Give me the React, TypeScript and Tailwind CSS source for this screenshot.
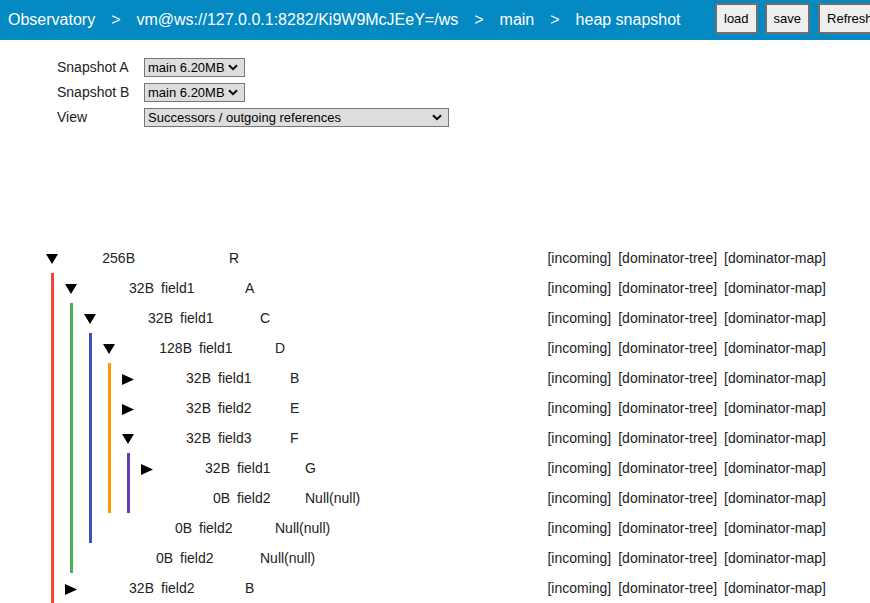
import React from "react";

type Node = {
  size: string;
  name: string;
  value: string;
  state: "open" | "closed" | "leaf";
  children?: Node[];
};

const tree: Node = {
  size: "256B",
  name: "",
  value: "R",
  state: "open",
  children: [
    {
      size: "32B",
      name: "field1",
      value: "A",
      state: "open",
      children: [
        {
          size: "32B",
          name: "field1",
          value: "C",
          state: "open",
          children: [
            {
              size: "128B",
              name: "field1",
              value: "D",
              state: "open",
              children: [
                { size: "32B", name: "field1", value: "B", state: "closed" },
                { size: "32B", name: "field2", value: "E", state: "closed" },
                {
                  size: "32B",
                  name: "field3",
                  value: "F",
                  state: "open",
                  children: [
                    { size: "32B", name: "field1", value: "G", state: "closed" },
                    { size: "0B", name: "field2", value: "Null(null)", state: "leaf" },
                  ],
                },
              ],
            },
            { size: "0B", name: "field2", value: "Null(null)", state: "leaf" },
          ],
        },
        { size: "0B", name: "field2", value: "Null(null)", state: "leaf" },
      ],
    },
    { size: "32B", name: "field2", value: "B", state: "closed" },
  ],
};

const nameWidths = ["w-[87px]", "w-[84px]", "w-[80px]", "w-[76px]", "w-[72px]", "w-[68px]", "w-[64px]"];
const borderColors = [
  "border-[#f44336]",
  "border-[#4caf50]",
  "border-[#3f51b5]",
  "border-[#ff9800]",
  "border-[#673ab7]",
  "border-[#f44336]",
];

function Tri({ state }: { state: Node["state"] }) {
  if (state === "leaf") return null;
  if (state === "open")
    return (
      <svg width="12" height="10" viewBox="0 0 12 10" className="mr-[2px] mt-[2px]">
        <polygon points="0,0 12,0 6,10" fill="#000" />
      </svg>
    );
  return (
    <svg width="12" height="11" viewBox="0 0 12 11" className="mr-[2px] mt-[2px]">
      <polygon points="0,0 12,5.5 0,11" fill="#000" />
    </svg>
  );
}

function TreeNode({ node, level }: { node: Node; level: number }) {
  return (
    <div>
      <div className="flex h-[30px] items-center leading-[30px] whitespace-nowrap">
        <div className="flex w-[17px] shrink-0 items-center justify-center">
          <Tri state={node.state} />
        </div>
        <div className="w-[74px] shrink-0 text-right">{node.size}</div>
        <div className={`ml-[7px] shrink-0 ${nameWidths[level]}`}>{node.name}</div>
        <div className="shrink-0">{node.value}</div>
        <div className="ml-auto flex gap-[7px]">
          <span>[incoming]</span>
          <span>[dominator-tree]</span>
          <span>[dominator-map]</span>
        </div>
      </div>
      {node.state === "open" && node.children && (
        <div className={`ml-[7px] border-l-[3px] pl-[9px] ${borderColors[level]}`}>
          {node.children.map((c, i) => (
            <TreeNode key={i} node={c} level={level + 1} />
          ))}
        </div>
      )}
    </div>
  );
}

function Chevron() {
  return (
    <svg width="10" height="7" viewBox="0 0 10 7">
      <path d="M1 1.2 L5 5.2 L9 1.2" stroke="#000" strokeWidth="2" fill="none" />
    </svg>
  );
}

function FakeSelect({ text, width }: { text: string; width: string }) {
  return (
    <div
      className={`flex h-[19px] ${width} items-center justify-between border border-[#767676] bg-[#dddddd] pl-[3px] pr-[6px] text-[13px] leading-none text-black`}
    >
      <span>{text}</span>
      <Chevron />
    </div>
  );
}

export default function App() {
  const crumbs = ["Observatory", "vm@ws://127.0.0.1:8282/Ki9W9McJEeY=/ws", "main", "heap snapshot"];
  return (
    <div className="h-[603px] w-[870px] overflow-hidden bg-white font-['Liberation_Sans',Arial,sans-serif] text-[14px] text-[#222]">
      <div className="flex h-[40px] w-full bg-[#0489c3] text-white">
        <div className="flex min-w-0 flex-1 items-center whitespace-nowrap text-[16px]">
          {crumbs.map((c, i) => (
            <React.Fragment key={i}>
              {i > 0 && <span className="px-2">&gt;</span>}
              <span className="px-2">{c}</span>
            </React.Fragment>
          ))}
        </div>
        <div className="flex w-[155px] shrink-0 gap-[7px] overflow-hidden pt-[3px]">
          <button className="h-[31px] shrink-0 border-2 border-[#6f6f6f] bg-[#efefef] px-[7px] text-[13px] text-black">
            load
          </button>
          <button className="h-[31px] shrink-0 border-2 border-[#6f6f6f] bg-[#efefef] px-[7px] text-[13px] text-black">
            save
          </button>
          <button className="ml-[1px] h-[31px] shrink-0 border-2 border-[#6f6f6f] bg-[#efefef] px-[7px] text-[13px] text-black">
            Refresh
          </button>
        </div>
      </div>

      <div className="flex flex-col gap-[6px] pl-[57px] pt-[18px]">
        <div className="flex h-[19px] items-center">
          <div className="w-[87px]">Snapshot A</div>
          <FakeSelect text="main 6.20MB" width="w-[101px]" />
        </div>
        <div className="flex h-[19px] items-center">
          <div className="w-[87px]">Snapshot B</div>
          <FakeSelect text="main 6.20MB" width="w-[101px]" />
        </div>
        <div className="flex h-[19px] items-center">
          <div className="w-[87px]">View</div>
          <FakeSelect text="Successors / outgoing references" width="w-[305px]" />
        </div>
      </div>

      <div className="ml-[44px] mt-[116px] w-[782px]">
        <TreeNode node={tree} level={0} />
      </div>
    </div>
  );
}
